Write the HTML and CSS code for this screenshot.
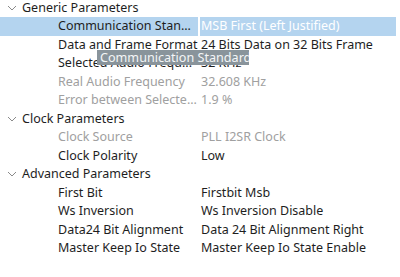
FILE: index.html
```html
<!DOCTYPE html>
<html lang="en">
<head>
    <meta charset="UTF-8">
    <title>Parameter Settings</title>
    <link rel="stylesheet" href="styles.css">
</head>
<body>

    <div class="props">
        <!-- Generic -->
        <div class="row group">
            <div class="name"><svg class="chev" width="10" height="6" viewBox="0 0 10 6"><polyline points="1,1 5,5 9,1"/></svg>Generic Parameters</div>
            <div class="value"></div>
        </div>
        <div class="row selected">
            <div class="name">Communication Stan...</div>
            <div class="value">MSB First (Left Justified)</div>
        </div>
        <div class="row">
            <div class="name">Data and Frame Format</div>
            <div class="value">24 Bits Data on 32 Bits Frame</div>
        </div>
        <div class="row">
            <div class="name">Selected Audio Frequ...</div>
            <div class="value">32 KHz</div>
        </div>
        <div class="row disabled">
            <div class="name">Real Audio Frequency</div>
            <div class="value">32.608 KHz</div>
        </div>
        <div class="row disabled">
            <div class="name">Error between Selecte...</div>
            <div class="value">1.9 %</div>
        </div>

        <!-- Clock -->
        <div class="row group">
            <div class="name"><svg class="chev" width="10" height="6" viewBox="0 0 10 6"><polyline points="1,1 5,5 9,1"/></svg>Clock Parameters</div>
            <div class="value"></div>
        </div>
        <div class="row disabled">
            <div class="name">Clock Source</div>
            <div class="value">PLL I2SR Clock</div>
        </div>
        <div class="row">
            <div class="name">Clock Polarity</div>
            <div class="value">Low</div>
        </div>

        <!-- Advanced -->
        <div class="row group">
            <div class="name"><svg class="chev" width="10" height="6" viewBox="0 0 10 6"><polyline points="1,1 5,5 9,1"/></svg>Advanced Parameters</div>
            <div class="value"></div>
        </div>
        <div class="row">
            <div class="name">First Bit</div>
            <div class="value">Firstbit Msb</div>
        </div>
        <div class="row">
            <div class="name">Ws Inversion</div>
            <div class="value">Ws Inversion Disable</div>
        </div>
        <div class="row">
            <div class="name">Data24 Bit Alignment</div>
            <div class="value">Data 24 Bit Alignment Right</div>
        </div>
        <div class="row">
            <div class="name">Master Keep Io State</div>
            <div class="value">Master Keep Io State Enable</div>
        </div>

        <div class="tooltip">Communication Standard</div>
    </div>

</body>
</html>
```

FILE: styles.css
```css
body {
    margin: 0;
    padding: 0;
    background-color: #fff;
    font-family: 'Noto Sans', sans-serif;
    font-size: 12.5px;
    color: #1e1e1e;
    overflow: hidden;
}
.props {
    position: relative;
    margin-top: -1.5px;
    width: 396px;
}
.row {
    display: grid;
    grid-template-columns: 198px 1fr;
    column-gap: 2px;
    height: 18.5px;
    line-height: 18.5px;
    white-space: nowrap;
}
.name {
    padding-left: 58px;
    overflow: hidden;
}
.value {
    padding-left: 1px;
    overflow: hidden;
}
.group .name {
    padding-left: 7px;
    display: flex;
    align-items: center;
    overflow: visible;
}
.chev {
    margin-right: 5px;
    fill: none;
    stroke: #8a8a8a;
    stroke-width: 1;
}
.selected .name,
.selected .value {
    background-color: #b4d4ef;
}
.selected .value {
    color: #fff;
}
.disabled {
    color: #a0a0a0;
}
.tooltip {
    position: absolute;
    left: 97px;
    top: 51px;
    width: 152px;
    height: 15.5px;
    line-height: 15.5px;
    padding-left: 3px;
    box-sizing: border-box;
    background-color: #89949b;
    color: #f4f6f7;
    font-size: 12.6px;
    white-space: nowrap;
    overflow: hidden;
}
```
